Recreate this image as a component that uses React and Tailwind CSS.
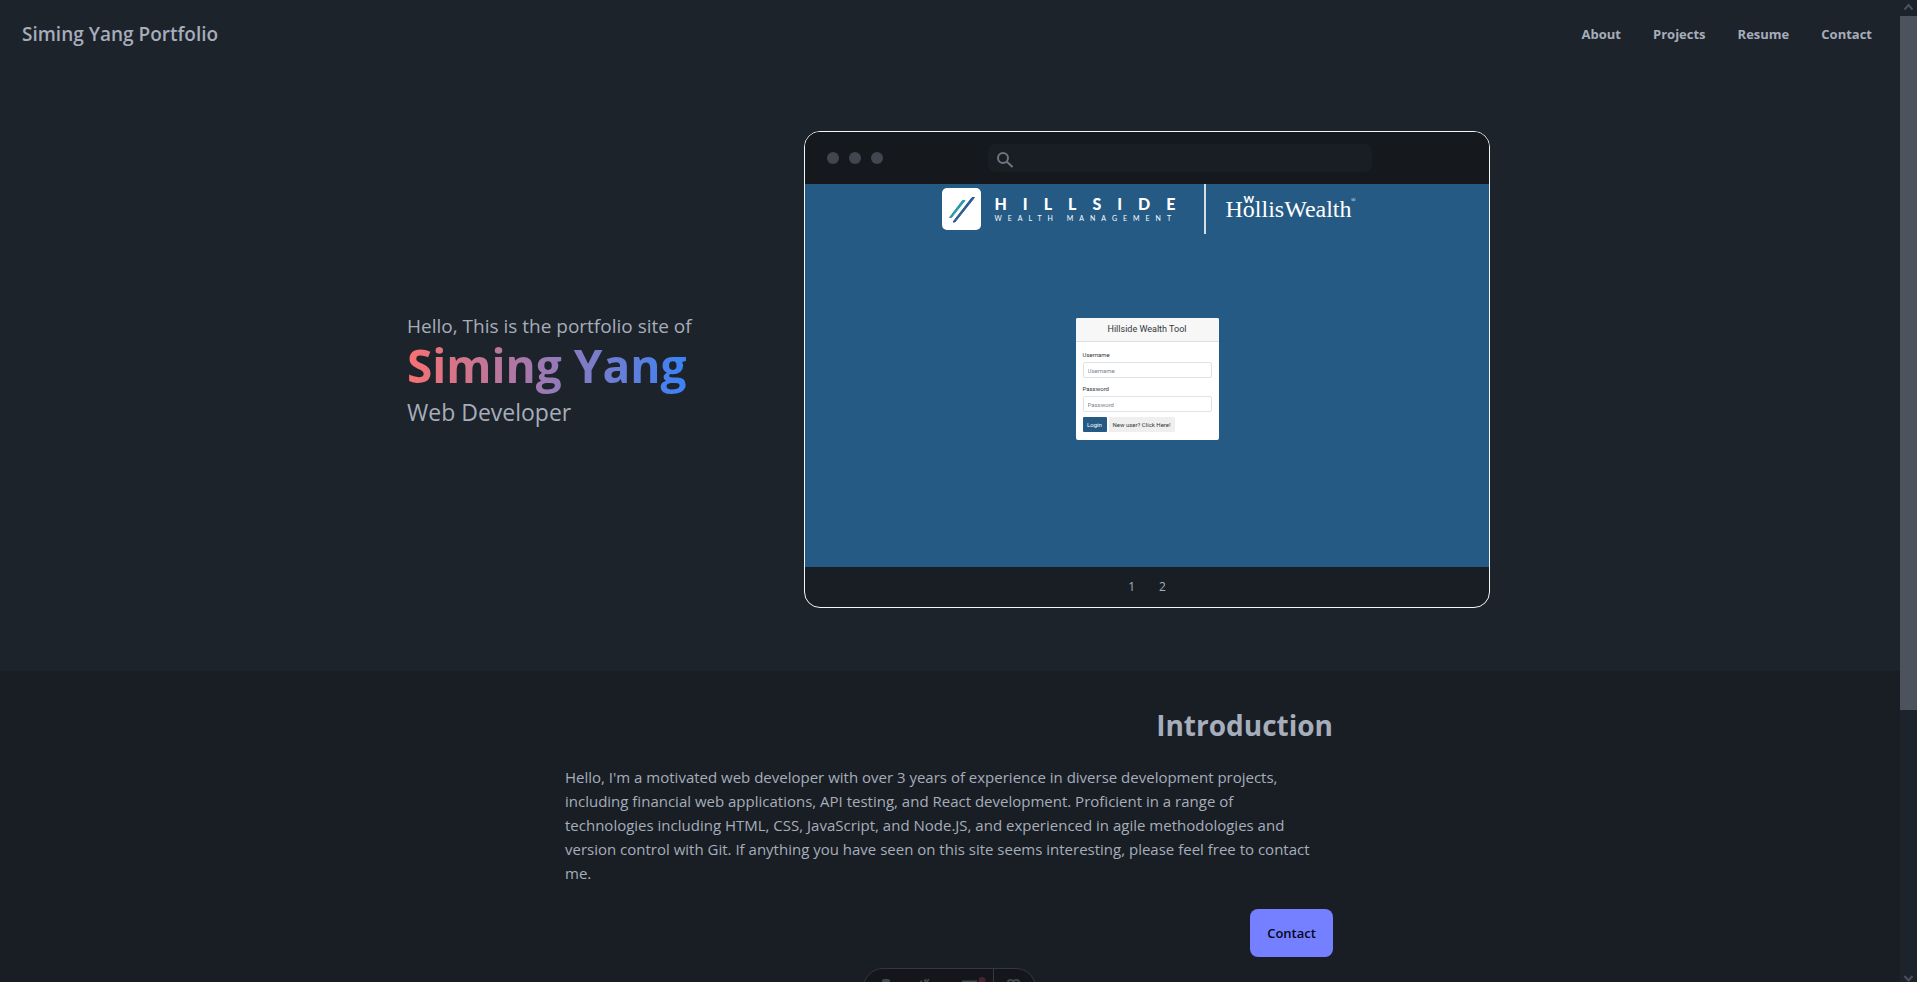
import React from "react";

const links = ["About", "Projects", "Resume", "Contact"];

function NavBar() {
  return (
    <header className="flex h-[68px] items-center justify-between pr-7 pl-[22px]">
      <a href="#top" className="text-[19px] leading-7 font-semibold">
        Siming Yang Portfolio
      </a>
      <nav className="flex gap-8 text-[13px] leading-5 font-bold">
        {links.map((l) => (
          <a key={l} href={"#" + l.toLowerCase()}>
            {l}
          </a>
        ))}
      </nav>
    </header>
  );
}

function HillsideLogo() {
  return (
    <svg viewBox="0 0 39 42" className="h-[42px] w-[39px]" aria-hidden="true">
      <rect width="39" height="42" rx="5" fill="#fff" />
      <path d="M7.500 29.500H9.500L23 12.500H20.500z" fill="#2a9aa8" stroke="#2a9aa8" />
      <path d="M11 34H13L32.500 9.500H30z" fill="#2a5b95" stroke="#2a5b95" />
    </svg>
  );
}

function BrandRow() {
  return (
    <div className="flex h-[50px] justify-center text-white">
      <div className="flex pt-1">
        <HillsideLogo />
        <div className="ml-[13px] w-[186px] pt-2 font-['Lato',sans-serif]">
          <div className="text-[16px] leading-4 font-black tracking-[16px] whitespace-nowrap">HILLSIDE</div>
          <div className="text-[7px] leading-3 tracking-[6px] whitespace-nowrap">WEALTH MANAGEMENT</div>
        </div>
      </div>
      <div className="ml-6 w-[2px] bg-white/80" />
      <div className="relative ml-[19px] pt-[11px] font-['Liberation_Serif',serif] text-[24px] leading-7">
        HollisWealth
        <span className="absolute top-[10px] left-[18px] font-['Lato',sans-serif] text-[10px] leading-[10px] font-black">
          W
        </span>
        <span className="absolute top-3 -right-1 text-[6px] leading-2">®</span>
      </div>
    </div>
  );
}

function LoginCard() {
  return (
    <form
      className="mt-[84px] w-[143px] overflow-hidden rounded-xs bg-white font-['Roboto',sans-serif] text-[#33373b]"
      onSubmit={(e) => e.preventDefault()}
    >
      <div className="h-6 border-b border-[#dfdfdf] bg-[#f7f7f7] text-center text-[9px] leading-[22px]">
        Hillside Wealth Tool
      </div>
      <div className="px-[7px] pt-[9px] pb-2 text-[6px] leading-2">
        <label htmlFor="user" className="mb-[3px] block">
          Username
        </label>
        <input
          id="user"
          type="text"
          placeholder="Username"
          className="block h-4 w-full rounded-xs border border-[#dfe2e6] px-1 placeholder:text-[#7d848b]"
        />
        <label htmlFor="pass" className="mt-[7px] mb-[3px] block">
          Password
        </label>
        <input
          id="pass"
          type="password"
          placeholder="Password"
          className="block h-4 w-full rounded-xs border border-[#dfe2e6] px-1 placeholder:text-[#7d848b]"
        />
        <div className="mt-[5px] flex gap-[2px]">
          <button type="submit" className="h-[15px] w-6 rounded-[1px] bg-[#255a84] text-white">
            Login
          </button>
          <button type="button" className="h-[15px] w-[66px] rounded-[1px] bg-[#efefef] whitespace-nowrap">
            New user? Click Here!
          </button>
        </div>
      </div>
    </form>
  );
}

function BrowserMockup() {
  return (
    <div className="w-[686px] overflow-hidden rounded-2xl border border-gray-100 bg-[#191e24]">
      <div className="flex h-[52px] items-center bg-[#15191e] pr-3 pl-[22px]">
        <div className="flex gap-[10px]">
          <span className="size-3 rounded-full bg-[#42464e]" />
          <span className="size-3 rounded-full bg-[#42464e]" />
          <span className="size-3 rounded-full bg-[#42464e]" />
        </div>
        <div className="mx-auto flex h-7 w-96 items-center rounded-lg bg-[#191e24] pl-[9px]">
          <svg viewBox="0 0 16 16" className="mt-1 size-4 shrink-0" fill="none" stroke="#6f747f" strokeWidth="2" aria-hidden="true">
            <circle cx="6" cy="6" r="5" />
            <path d="M9.6 9.6 15.5 15" />
          </svg>
          <input aria-label="Address" type="text" className="min-w-0 flex-1 bg-transparent px-2 text-[12px] outline-none" />
        </div>
      </div>
      <div className="flex h-[383px] flex-col items-center bg-[#255a84]">
        <BrandRow />
        <LoginCard />
      </div>
      <div className="flex h-10 items-center justify-center gap-2 text-[12px] leading-4">
        <button type="button" className="px-2">
          1
        </button>
        <button type="button" className="px-2">
          2
        </button>
      </div>
    </div>
  );
}

function Hero() {
  return (
    <section id="projects" className="flex items-center justify-center gap-28 py-[63px] pr-[3px]">
      <div className="w-[285px] whitespace-nowrap">
        <p className="text-[19px] leading-7">Hello, This is the portfolio site of</p>
        <h1 className="w-fit bg-linear-to-r/srgb from-[#f87171] to-[#3b82f6] bg-clip-text pb-[6px] text-[46px] leading-[50px] font-bold text-transparent">
          Siming Yang
        </h1>
        <p className="text-[23px] leading-8">Web Developer</p>
      </div>
      <BrowserMockup />
    </section>
  );
}

function Introduction() {
  return (
    <section id="about" className="flex flex-1 justify-center bg-[#191e24] pt-9 pr-[2px]">
      <div className="flex w-full max-w-3xl flex-col items-end">
        <h2 className="text-[28px] leading-9 font-bold">Introduction</h2>
        <p className="mt-[22px] w-full pr-3.5 text-[15px] leading-6">
          Hello, I'm a motivated web developer with over 3 years of experience in diverse development projects,
          including financial web applications, API testing, and React development. Proficient in a range of
          technologies including HTML, CSS, JavaScript, and Node.JS, and experienced in agile methodologies and
          version control with Git. If anything you have seen on this site seems interesting, please feel free to
          contact me.
        </p>
        <button type="button" className="mt-6 h-12 w-[83px] shrink-0 rounded-lg bg-[#7480ff] text-[13px] leading-5 font-semibold text-[#050617]">
          Contact
        </button>
      </div>
    </section>
  );
}

function Dock() {
  return (
    <div className="absolute inset-x-0 bottom-0 flex h-[14px] justify-center overflow-hidden pr-[1px]">
      <div className="h-10 w-[173px] shrink-0 rounded-[20px] border border-[#343841] bg-[#14161b]">
        <svg viewBox="0 0 171 38" className="h-[38px] w-[171px]" fill="none" stroke="#43464c" aria-hidden="true">
          <path d="M18 14v-2q0-2 2-2h4q2 0 2 2v2z" fill="#43464c" stroke="none" />
          <path d="M56 13l2-1M60 11l2 2M62 10v2M65 10l-2 3" strokeWidth="1.5" />
          <path d="M98 12.500h15" strokeWidth="2" />
          <circle cx="118" cy="11.500" r="3.500" fill="#4a2032" stroke="none" />
          <path d="M129.500 0v38" stroke="#343841" />
          <path d="M144 13q0-2 2.500-2t3 1.500q.5-1.500 3-1.500t2.500 2" strokeWidth="2" />
        </svg>
      </div>
    </div>
  );
}

function ScrollTrack() {
  return (
    <div className="flex w-[17px] shrink-0 flex-col bg-[#1d232a]" aria-hidden="true">
      <svg viewBox="0 0 17 16" className="h-4 w-[17px]" fill="none" stroke="#4b515b" strokeWidth="2">
        <path d="M4.500 9.500l4-4.500 4 4.500" />
      </svg>
      <div className="h-[70.7%] bg-[#4d535d]" />
      <svg viewBox="0 0 17 16" className="mt-auto h-4 w-[17px]" fill="none" stroke="#4b515b" strokeWidth="2">
        <path d="M4.500 10l4 4.500 4-4.500" />
      </svg>
    </div>
  );
}

export default function App() {
  return (
    <div className="flex h-screen overflow-hidden bg-[#1d232a] font-['Open_Sans','Noto_Sans',sans-serif] text-[#a6adbb]">
      <div id="top" className="relative flex min-w-0 flex-1 flex-col">
        <NavBar />
        <Hero />
        <Introduction />
        <Dock />
      </div>
      <ScrollTrack />
    </div>
  );
}
